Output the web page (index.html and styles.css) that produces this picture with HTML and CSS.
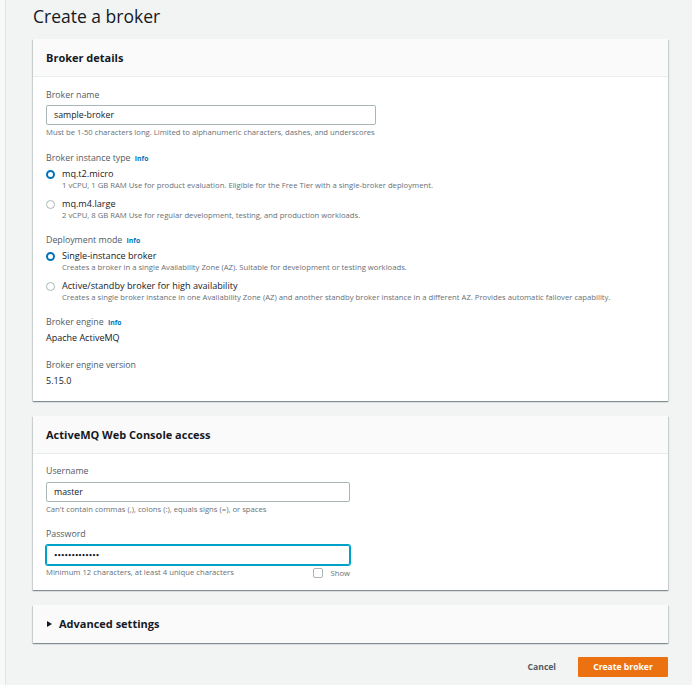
FILE: index.html
```html
<!DOCTYPE html>
<html>
<head>
<meta charset="utf-8">
<link rel="stylesheet" href="styles.css">
</head>
<body>
<div class="shell">
  <div class="strip"></div>
  <main class="main">
    <h1 class="title">Create a broker</h1>

    <section class="card">
      <div class="card-head">Broker details</div>
      <div class="card-body">
        <div class="field first">
          <div class="label">Broker name</div>
          <div class="input wide">sample-broker</div>
          <div class="help">Must be 1-50 characters long. Limited to alphanumeric characters, dashes, and underscores</div>
        </div>

        <div class="field">
          <div class="label">Broker instance type <span class="info">Info</span></div>
          <div class="option">
            <span class="radio on"></span>
            <div class="opt-text">
              <div class="opt-title">mq.t2.micro</div>
              <div class="help">1 vCPU, 1 GB RAM Use for product evaluation. Eligible for the Free Tier with a single-broker deployment.</div>
            </div>
          </div>
          <div class="option next">
            <span class="radio"></span>
            <div class="opt-text">
              <div class="opt-title">mq.m4.large</div>
              <div class="help">2 vCPU, 8 GB RAM Use for regular development, testing, and production workloads.</div>
            </div>
          </div>
        </div>

        <div class="field dep">
          <div class="label">Deployment mode <span class="info">Info</span></div>
          <div class="option">
            <span class="radio on"></span>
            <div class="opt-text">
              <div class="opt-title">Single-instance broker</div>
              <div class="help">Creates a broker in a single Availability Zone (AZ). Suitable for development or testing workloads.</div>
            </div>
          </div>
          <div class="option next">
            <span class="radio"></span>
            <div class="opt-text">
              <div class="opt-title">Active/standby broker for high availability</div>
              <div class="help">Creates a single broker instance in one Availability Zone (AZ) and another standby broker instance in a different AZ. Provides automatic failover capability.</div>
            </div>
          </div>
        </div>

        <div class="field eng">
          <div class="label">Broker engine <span class="info">Info</span></div>
          <div class="value">Apache ActiveMQ</div>
        </div>

        <div class="field">
          <div class="label">Broker engine version</div>
          <div class="value">5.15.0</div>
        </div>
      </div>
    </section>

    <section class="card">
      <div class="card-head">ActiveMQ Web Console access</div>
      <div class="card-body body2">
        <div class="field first">
          <div class="label">Username</div>
          <div class="input mid">master</div>
          <div class="help">Can't contain commas (,), colons (:), equals signs (=), or spaces</div>
        </div>
        <div class="field pw">
          <div class="label">Password</div>
          <div class="input mid focus"><span class="dots">•••••••••••••</span></div>
          <div class="help-row">
            <div class="help">Minimum 12 characters, at least 4 unique characters</div>
            <label class="show"><span class="check"></span>Show</label>
          </div>
        </div>
      </div>
    </section>

    <section class="card collapsed">
      <div class="card-head adv"><span class="caret"></span>Advanced settings</div>
    </section>

    <div class="actions">
      <span class="cancel">Cancel</span>
      <span class="primary">Create broker</span>
    </div>
  </main>
</div>
</body>
</html>
```

FILE: styles.css
```css
* { box-sizing: border-box; }
html, body { margin: 0; padding: 0; }
body {
  background: #f2f3f3;
  font-family: "Open Sans", Lato, "Liberation Sans", sans-serif;
  color: #16191f;
}
.shell { display: flex; min-height: 685px; }
.strip {
  width: 6px;
  flex: none;
  background: #f7f8f8;
  border-right: 1px solid #e1e4e4;
}
.main {
  flex: 1;
  padding: 0 24px 0 27px;
}
.title {
  margin: 0;
  padding-top: 3px;
  font-size: 17.5px;
  line-height: 26px;
  font-weight: 400;
  color: #16191f;
  height: 39px;
}
.card {
  background: #fff;
  box-shadow: 0 1px 1px rgba(0, 28, 36, 0.3), 1px 1px 1px rgba(0, 28, 36, 0.12), -1px 1px 1px rgba(0, 28, 36, 0.12);
  margin-bottom: 15px;
}
.card-head {
  height: 38px;
  line-height: 38px;
  padding: 0 13px;
  background: #fafafa;
  border-bottom: 1px solid #eaeded;
  font-size: 11px;
  font-weight: 700;
  color: #16191f;
}
.card-body { padding: 12px 13px 14px; }
.body2 { padding: 11px 13px 12px; }
.field { margin-top: 15px; }
.field.first { margin-top: 0; }
.field.dep { margin-top: 14px; }
.field.eng { margin-top: 14px; }
.field.pw { margin-top: 14px; }
.label {
  font-size: 8.8px;
  line-height: 12px;
  height: 12px;
  color: #545b64;
}
.info {
  color: #0073bb;
  font-weight: 700;
  font-size: 6.8px;
  line-height: 0;
  margin-left: 2px;
}
.input {
  margin-top: 4px;
  height: 20px;
  border: 1px solid #aab7b8;
  border-radius: 2px;
  padding: 0 7px;
  font-size: 8.8px;
  line-height: 18px;
  color: #16191f;
}
.input.wide { width: 330px; }
.input.mid { width: 304px; margin-top: 5px; }
.input.focus {
  border-color: #00a1c9;
  box-shadow: 0 0 0 1px #00a1c9;
}
.dots {
  font-family: Lato, sans-serif;
  font-size: 6px;
  letter-spacing: 0;
  line-height: 0;
  vertical-align: 1px;
}
.help {
  margin-top: 2px;
  font-size: 7.7px;
  line-height: 10px;
  color: #687078;
}
.option {
  display: flex;
  align-items: flex-start;
  margin-top: 4px;
}
.option.next { margin-top: 8px; }
.radio {
  width: 9px;
  height: 9px;
  border-radius: 50%;
  border: 1px solid #aab7b8;
  background: #fff;
  flex: none;
  margin: 1.5px 7px 0 0;
}
.radio.on { border: 2.5px solid #0073bb; }
.opt-text { flex: 1; }
.opt-title {
  font-size: 9.1px;
  line-height: 12px;
  color: #16191f;
}
.opt-text .help { margin-top: 0; }
.value {
  margin-top: 4px;
  font-size: 9px;
  line-height: 12px;
  color: #16191f;
}
.help-row {
  display: flex;
  align-items: center;
  width: 304px;
  justify-content: space-between;
  margin-top: 1px;
}
.help-row .help { margin-top: 0; }
.show {
  display: flex;
  align-items: center;
  font-size: 7.7px;
  color: #687078;
  line-height: 10px;
  padding-top: 2px;
}
.check {
  width: 10px;
  height: 10px;
  border: 1px solid #aab7b8;
  border-radius: 2px;
  margin-right: 7px;
  background: #fff;
}
.collapsed .card-head {
  border-bottom: 0;
  display: flex;
  align-items: center;
}
.caret {
  width: 0;
  height: 0;
  border-left: 5px solid #16191f;
  border-top: 3.5px solid transparent;
  border-bottom: 3.5px solid transparent;
  margin: 0 7px 0 1px;
}
.actions {
  display: flex;
  justify-content: flex-end;
  align-items: center;
  margin-top: -1px;
}
.cancel {
  font-size: 8.6px;
  font-weight: 700;
  color: #545b64;
  margin-right: 22px;
}
.primary {
  width: 90px;
  height: 20px;
  line-height: 20px;
  text-align: center;
  background: #ec7211;
  color: #fff;
  font-size: 8.6px;
  font-weight: 700;
  border-radius: 1px;
}
```
